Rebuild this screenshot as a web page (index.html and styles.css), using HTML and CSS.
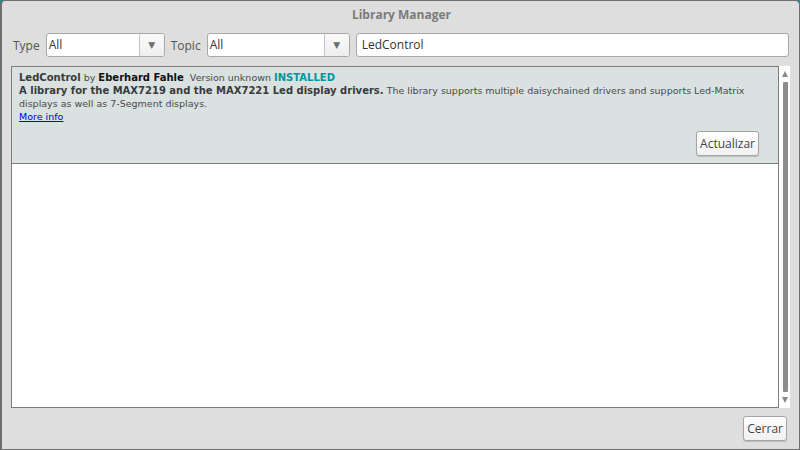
FILE: index.html
```html
<!DOCTYPE html>
<html>
<head>
<meta charset="utf-8">
<link rel="stylesheet" href="styles.css">
</head>
<body>
<div class="window">
  <div class="title">Library Manager</div>
  <div class="filters">
    <span class="label">Type</span>
    <div class="combo combo-type"><span class="combo-value">All</span><span class="combo-arrow">▼</span></div>
    <span class="label">Topic</span>
    <div class="combo combo-topic"><span class="combo-value">All</span><span class="combo-arrow">▼</span></div>
    <div class="search">LedControl</div>
  </div>
  <div class="list">
    <div class="list-inner">
      <div class="item">
        <div class="line"><b class="name">LedControl</b> by <b class="author">Eberhard Fahle</b>&nbsp; Version unknown <b class="installed">INSTALLED</b></div>
        <div class="desc"><b>A library for the MAX7219 and the MAX7221 Led display drivers.</b> The library supports multiple daisychained drivers and supports <span class="nowrap">Led-Matrix</span> displays as well as 7-Segment displays.</div>
        <div class="line"><a class="more" href="#">More info</a></div>
        <div class="item-actions"><button class="btn">Actualizar</button></div>
      </div>
    </div>
    <div class="scrollbar">
      <span class="arrow-up"></span>
      <span class="thumb"></span>
      <span class="arrow-down"></span>
    </div>
  </div>
  <div class="footer"><button class="btn">Cerrar</button></div>
</div>
</body>
</html>
```
FILE: styles.css
```css
html, body {
  margin: 0;
  padding: 0;
  background: #2a8c8c;
}
.window {
  width: 800px;
  height: 450px;
  box-sizing: border-box;
  background: #dedede;
  border: 1px solid #6f6f6f;
  border-left-width: 2px;
  border-radius: 5px 5px 0 0;
  display: flex;
  flex-direction: column;
  font-family: "Open Sans", "DejaVu Sans", sans-serif;
  color: #444;
}
.title {
  height: 30px;
  line-height: 28px;
  text-align: center;
  font-weight: bold;
  font-size: 12px;
  color: #7b7b7b;
  padding-left: 2px;
}
.filters {
  display: flex;
  align-items: center;
  height: 24px;
  margin-top: 2px;
  padding: 0 10px 0 11px;
}
.label {
  font-size: 12px;
  color: #555;
  margin-right: 6px;
}
.combo {
  height: 24px;
  box-sizing: border-box;
  border: 1px solid #a9a9a9;
  border-radius: 3px;
  background: #fff;
  display: flex;
  align-items: stretch;
  margin-right: 6px;
}
.combo-type { width: 119px; }
.combo-topic { width: 143px; }
.combo-value {
  flex: 1;
  font-size: 12px;
  color: #333;
  line-height: 22px;
  padding-left: 2px;
}
.combo-arrow {
  width: 24px;
  border-left: 1px solid #c4c4c4;
  background: linear-gradient(#fafafa, #eeeeee);
  border-radius: 0 2px 2px 0;
  font-size: 9px;
  color: #6d6d6d;
  text-align: center;
  line-height: 22px;
}
.search {
  flex: 1;
  height: 24px;
  box-sizing: border-box;
  border: 1px solid #a9a9a9;
  border-radius: 3px;
  background: #fff;
  font-size: 12px;
  color: #333;
  line-height: 22px;
  padding-left: 5px;
}
.list {
  display: flex;
  margin: 9px 9px 0 9px;
  height: 342px;
}
.list-inner {
  flex: 1;
  border: 1px solid #7c7c7c;
  background: #fff;
}
.item {
  background: #d9e1e1;
  border-bottom: 1px solid #7c7c7c;
  height: 97px;
  box-sizing: border-box;
  padding: 4px 4px 0 7px;
  font-family: "DejaVu Sans", "Open Sans", sans-serif;
  font-size: 9.5px;
  line-height: 13px;
  color: #4a4a4a;
}
.item b { color: #3a3a3a; font-size: 10px; }
.item .author { color: #111; }
.item .installed { color: #00979c; }
.nowrap { white-space: nowrap; }
.more {
  color: #0000ee;
  text-decoration: underline;
}
.item-actions {
  display: flex;
  justify-content: flex-end;
  margin-top: 8px;
  padding-right: 15px;
}
.btn {
  font-family: "Open Sans", "DejaVu Sans", sans-serif;
  font-size: 12px;
  color: #444;
  background: linear-gradient(#ffffff, #f0f0f0);
  border: 1px solid #a5a5a5;
  border-radius: 3px;
  height: 25px;
  padding: 0 3px;
  box-shadow: 0 1px 1px rgba(0,0,0,0.15);
}
.scrollbar {
  width: 11px;
  background: #fff;
  display: flex;
  flex-direction: column;
  align-items: center;
}
.arrow-up {
  margin-top: 5px;
  width: 0; height: 0;
  border-left: 3px solid transparent;
  border-right: 3px solid transparent;
  border-bottom: 6px solid #888;
}
.thumb {
  margin-top: 5px;
  width: 5px;
  flex: 1;
  background: #8c8c8c;
  border-radius: 1px;
  margin-left: 1px;
}
.arrow-down {
  margin: 5px 0 5px;
  width: 0; height: 0;
  border-left: 3px solid transparent;
  border-right: 3px solid transparent;
  border-top: 6px solid #888;
}
.footer {
  display: flex;
  justify-content: flex-end;
  padding: 8px 12px 0 0;
}
```
